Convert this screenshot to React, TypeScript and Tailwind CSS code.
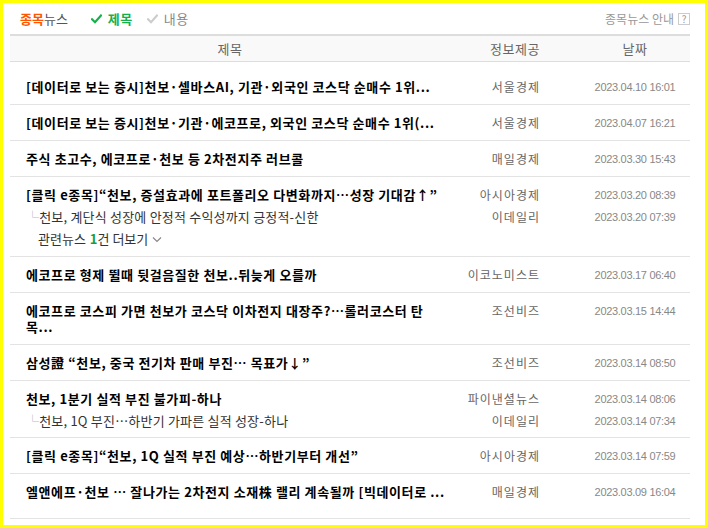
import React from "react";

type Sub = { title: string; src: string; date: string };
type Row = {
  title: string[];
  src: string;
  date: string;
  subs?: Sub[];
  more?: number;
  tall?: boolean;
};

const rows: Row[] = [
  { title: ["[데이터로 보는 증시]천보·셀바스AI, 기관·외국인 코스닥 순매수 1위..."], src: "서울경제", date: "2023.04.10 16:01" },
  { title: ["[데이터로 보는 증시]천보·기관·에코프로, 외국인 코스닥 순매수 1위(..."], src: "서울경제", date: "2023.04.07 16:21" },
  { title: ["주식 초고수, 에코프로·천보 등 2차전지주 러브콜"], src: "매일경제", date: "2023.03.30 15:43" },
  {
    title: ["[클릭 e종목]“천보, 증설효과에 포트폴리오 다변화까지…성장 기대감↑”"],
    src: "아시아경제",
    date: "2023.03.20 08:39",
    subs: [{ title: "천보, 계단식 성장에 안정적 수익성까지 긍정적-신한", src: "이데일리", date: "2023.03.20 07:39" }],
    more: 1,
  },
  { title: ["에코프로 형제 뛸때 뒷걸음질한 천보..뒤늦게 오를까"], src: "이코노미스트", date: "2023.03.17 06:40" },
  { title: ["에코프로 코스피 가면 천보가 코스닥 이차전지 대장주?…롤러코스터 탄", "목..."], src: "조선비즈", date: "2023.03.15 14:44" },
  { title: ["삼성證 “천보, 중국 전기차 판매 부진… 목표가↓”"], src: "조선비즈", date: "2023.03.14 08:50" },
  {
    title: ["천보, 1분기 실적 부진 불가피-하나"],
    src: "파이낸셜뉴스",
    date: "2023.03.14 08:06",
    subs: [{ title: "천보, 1Q 부진…하반기 가파른 실적 성장-하나", src: "이데일리", date: "2023.03.14 07:34" }],
  },
  { title: ["[클릭 e종목]“천보, 1Q 실적 부진 예상…하반기부터 개선”"], src: "아시아경제", date: "2023.03.14 07:59" },
  { title: ["엘앤에프·천보 … 잘나가는 2차전지 소재株 랠리 계속될까 [빅데이터로 ..."], src: "매일경제", date: "2023.03.09 16:04", tall: true },
];

const Check = ({ color }: { color: string }) => (
  <svg width="11" height="10" viewBox="0 0 11 10" className="shrink-0">
    <path d="M1 5.2 L4 8.2 L10 1.5" fill="none" stroke={color} strokeWidth="2.2" strokeLinecap="square" />
  </svg>
);

const font = { fontFamily: "'Noto Sans CJK KR', 'Noto Sans', sans-serif" };
const dateFont = { fontFamily: "'Liberation Sans', sans-serif" };

export default function App() {
  return (
    <div
      className="w-[708px] h-[528px] box-border border-[3px] border-[#ffff00] bg-white pl-[7px] pr-[15px] overflow-hidden"
      style={font}
    >
      {/* top bar */}
      <div className="h-[31px] flex items-center justify-between pl-[10px]">
        <div className="flex items-center text-[13px] leading-[16px]">
          <span className="font-bold text-[#ff5400]">종목</span>
          <span className="text-[#555]">뉴스</span>
          <span className="ml-[23px] flex items-center gap-[6px]">
            <Check color="#14b14b" />
            <span className="font-bold text-[#14b14b] tracking-[0.5px]">제목</span>
          </span>
          <span className="ml-[14px] flex items-center gap-[6px]">
            <Check color="#cccccc" />
            <span className="text-[#888] tracking-[0.5px]">내용</span>
          </span>
        </div>
        <div className="flex items-center gap-[4px] text-[12px] text-[#999]">
          <span>종목뉴스 안내</span>
          <span className="w-[12px] h-[12px] border border-[#ccc] flex items-center justify-center text-[10px] leading-none text-[#999]">?</span>
        </div>
      </div>

      {/* header */}
      <div className="border-t-2 border-b border-[#dddddd] bg-[#f9f9f9] h-[28px] flex items-center text-[13px] text-[#666]">
        <div className="w-[440px] text-center tracking-[0.5px]">제목</div>
        <div className="w-[130px] text-center tracking-[0.5px]">정보제공</div>
        <div className="w-[110px] text-center tracking-[0.5px]">날짜</div>
      </div>

      <div className="pt-[7px]">
        {rows.map((r, i) => (
          <div
            key={i}
            className={`border-b border-[#e3e3e3] pt-[10px] ${
              r.more !== undefined ? "pb-[6px]" : r.subs ? "pb-[5px]" : r.tall ? "pb-[18px]" : r.title.length > 1 ? "pb-[9px]" : "pb-[9px]"
            }`}
          >
            <div className="flex leading-[16px]">
              <div className="w-[440px] pl-[16px] text-[13px] font-bold text-black tracking-[0.6px]">
                {r.title.map((t, j) => (
                  <div key={j} className="whitespace-nowrap">{t}</div>
                ))}
              </div>
              <div className="w-[130px] pr-[40px] text-right text-[12px] text-[#666] tracking-[1px]">{r.src}</div>
              <div className="w-[110px] text-center text-[11px] text-[#888] tracking-[-0.3px]" style={dateFont}>{r.date}</div>
            </div>
            {r.subs && (
              <div className="pt-[3px]">
                {r.subs.map((s, k) => (
                  <div key={k} className="flex items-center h-[22px]">
                    <div className="w-[440px] pl-[16px] text-[13px] text-[#333] whitespace-nowrap tracking-[0.2px]">
                      <span className="text-[#bbb]">└</span>
                      {s.title}
                    </div>
                    <div className="w-[130px] pr-[40px] text-right text-[12px] text-[#666] tracking-[1px]">{s.src}</div>
                    <div className="w-[110px] text-center text-[11px] text-[#888] tracking-[-0.3px]" style={dateFont}>{s.date}</div>
                  </div>
                ))}
                {r.more !== undefined && (
                  <div className="flex items-center h-[22px] pl-[28px] text-[13px] text-[#333]">
                    <span>관련뉴스</span>
                    <span className="font-bold text-[#14a03c] ml-[4px]">{r.more}</span>
                    <span>건 더보기</span>
                    <svg width="10" height="7" viewBox="0 0 10 7" className="ml-[4px]">
                      <path d="M1 1.5 L5 5.5 L9 1.5" fill="none" stroke="#888" strokeWidth="1.2" />
                    </svg>
                  </div>
                )}
              </div>
            )}
          </div>
        ))}
      </div>
    </div>
  );
}
